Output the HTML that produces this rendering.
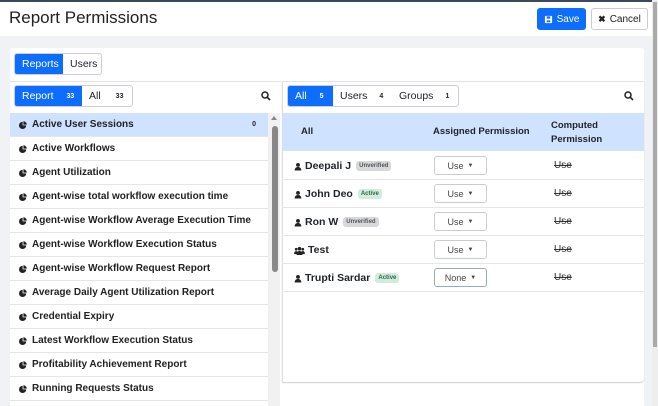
<!DOCTYPE html>
<html><head><meta charset="utf-8"><style>
*{box-sizing:border-box;margin:0;padding:0}
html,body{width:658px;height:406px;overflow:hidden}
body{background:#f0f2f5;font-family:"Liberation Sans",Arial,sans-serif;color:#212529;position:relative}
.top{position:absolute;left:0;top:0;width:652px;height:36px;background:#fff;border-top:2px solid #3a4a5c}
.title{position:absolute;left:9px;top:6px;font-size:17px;color:#222}
.btn{position:absolute;height:22px;border-radius:3px;font-size:10px;display:flex;align-items:center;justify-content:center;gap:4px}
.save{left:537px;top:8px;width:49px;background:#0d6efd;color:#fff}
.cancel{left:591px;top:8px;width:57px;background:#fff;border:1px solid #ccc;color:#222}
.card{position:absolute;left:10px;top:48px;width:634px;height:360px;background:#fff;border-radius:3px}
.seg{position:absolute;display:flex;border:1px solid #ccd;border-radius:3px;overflow:hidden;height:22px;font-size:10.5px}
.seg div{display:flex;align-items:center;justify-content:flex-start;padding-left:7px}
.seg .on{background:#0d6efd;color:#fff}
.seg b{font-size:7px}
.left{position:absolute;left:10px;top:81px;width:271px;height:325px;background:#fff;border-top:1px solid #e3e3e3}
.row{position:absolute;left:10px;width:258px;height:24px;border-bottom:1px solid #e6e6e6;font-size:10px;font-weight:bold;display:flex;align-items:center;padding-left:9px;color:#222}
.row.sel{background:#cfe2ff}
.pie{width:8px;height:8px;margin-right:5px}
.sb{position:absolute;left:268px;top:113px;width:12px;height:293px;background:#f1f1f1}
.thumb{position:absolute;left:272px;top:126px;width:6px;height:146px;background:#888;border-radius:3px}
.right{position:absolute;left:282px;top:81px;width:362px;height:301px;background:#fff;border-left:1px solid #ddd;border-top:1px solid #e3e3e3;border-radius:0 0 4px 0;box-shadow:0 1px 1px #ccc}
.hdr{position:absolute;left:282px;top:113px;width:362px;height:38px;background:#cfe2ff;font-size:9.5px;font-weight:bold}
.r{position:absolute;left:282px;width:362px;height:28px;border-bottom:1px solid #e6e6e6;font-size:10px}
.nm{position:absolute;left:12px;top:8px;font-weight:bold;display:flex;align-items:center;gap:3px;font-size:10.5px}
.bd{font-size:6px;padding:2px 3px;border-radius:3px;font-weight:bold;margin-left:2px}
.un{background:#d6d8db;color:#555}
.ac{background:#d1ecdf;color:#2a6a45}
.dd{position:absolute;left:152px;top:4px;width:53px;height:19px;border:1px solid #ccc;border-radius:3px;font-size:9px;display:flex;align-items:center;justify-content:center;color:#444}
.dd i{font-style:normal;font-size:6px;margin-left:4px}
.cp{position:absolute;left:272px;top:8px;font-size:10px;text-decoration:line-through;color:#333}
.psb{position:absolute;left:652px;top:0;width:6px;height:406px;background:#eee}
.pth{position:absolute;left:653px;top:2px;width:4px;height:345px;background:#aaa}
</style></head><body>
<svg width="0" height="0" style="position:absolute"><defs>
<symbol id="pie" viewBox="0 0 10 10"><path d="M4.5 1A4.5 4.5 0 1 0 9 5.5H4.5Z" fill="#222"/><path d="M5.5 0.3A4.3 4.3 0 0 1 9.7 4.5H5.5Z" fill="#222"/></symbol>
<symbol id="usr" viewBox="0 0 10 10"><circle cx="5" cy="3" r="2.4" fill="#222"/><path d="M0.8 10C0.8 7 2.5 5.6 5 5.6S9.2 7 9.2 10Z" fill="#222"/></symbol>
<symbol id="grp" viewBox="0 0 12 10"><circle cx="6" cy="3" r="2" fill="#222"/><circle cx="2.3" cy="3.6" r="1.5" fill="#222"/><circle cx="9.7" cy="3.6" r="1.5" fill="#222"/><path d="M2.8 10C2.8 7 4.2 5.6 6 5.6S9.2 7 9.2 10Z" fill="#222"/><path d="M0 9C0 6.8 1 5.7 2.4 5.7S4 6.2 4 6.5V9Z M12 9C12 6.8 11 5.7 9.6 5.7S8 6.2 8 6.5V9Z" fill="#222"/></symbol>
</defs></svg>
<div class="top"><div class="title">Report Permissions</div></div>
<div class="btn save"><svg width="9" height="9" viewBox="0 0 10 10"><rect x="1" y="1" width="8" height="8" rx="1" fill="#fff"/><rect x="3" y="1.5" width="4" height="2.5" fill="#0d6efd"/><rect x="3" y="6" width="4" height="2" fill="#0d6efd"/></svg>Save</div>
<div class="btn cancel"><b style="font-size:9px">✖</b>Cancel</div>
<div class="card"></div>
<div class="seg" style="left:14px;top:53px"><div class="on" style="width:48px">Reports</div><div style="width:38px">Users</div></div>
<div class="left"></div>
<div class="seg" style="left:14px;top:85px"><div class="on" style="width:67px">Report<b style="margin-left:13px">33</b></div><div style="width:50px">All<b style="margin-left:15px">33</b></div></div>
<svg style="position:absolute;left:261px;top:91px" width="10" height="10" viewBox="0 0 10 10"><circle cx="4" cy="4" r="3" fill="none" stroke="#222" stroke-width="1.5"/><path d="M6.3 6.3L9 9" stroke="#222" stroke-width="1.6"/></svg>
<div class="row sel" style="top:113px"><svg class="pie"><use href="#pie"/></svg>Active User Sessions<span style="margin-left:auto;margin-right:12px;font-size:7px">0</span></div>
<div class="row" style="top:137px"><svg class="pie"><use href="#pie"/></svg>Active Workflows</div>
<div class="row" style="top:161px"><svg class="pie"><use href="#pie"/></svg>Agent Utilization</div>
<div class="row" style="top:185px"><svg class="pie"><use href="#pie"/></svg>Agent-wise total workflow execution time</div>
<div class="row" style="top:209px"><svg class="pie"><use href="#pie"/></svg>Agent-wise Workflow Average Execution Time</div>
<div class="row" style="top:233px"><svg class="pie"><use href="#pie"/></svg>Agent-wise Workflow Execution Status</div>
<div class="row" style="top:257px"><svg class="pie"><use href="#pie"/></svg>Agent-wise Workflow Request Report</div>
<div class="row" style="top:281px"><svg class="pie"><use href="#pie"/></svg>Average Daily Agent Utilization Report</div>
<div class="row" style="top:305px"><svg class="pie"><use href="#pie"/></svg>Credential Expiry</div>
<div class="row" style="top:329px"><svg class="pie"><use href="#pie"/></svg>Latest Workflow Execution Status</div>
<div class="row" style="top:353px"><svg class="pie"><use href="#pie"/></svg>Profitability Achievement Report</div>
<div class="row" style="top:377px"><svg class="pie"><use href="#pie"/></svg>Running Requests Status</div>
<div class="row" style="top:401px"></div>
<div class="sb"></div><div class="thumb"></div>
<div style="position:absolute;left:271px;top:116px;width:0;height:0;border-left:3px solid transparent;border-right:3px solid transparent;border-bottom:4px solid #888"></div>
<div class="right"></div>
<div class="seg" style="left:287px;top:85px"><div class="on" style="width:45px">All<b style="margin-left:13px">5</b></div><div style="width:59px">Users<b style="margin-left:12px">4</b></div><div style="width:66px">Groups<b style="margin-left:12px">1</b></div></div>
<svg style="position:absolute;left:624px;top:91px" width="10" height="10" viewBox="0 0 10 10"><circle cx="4" cy="4" r="3" fill="none" stroke="#222" stroke-width="1.5"/><path d="M6.3 6.3L9 9" stroke="#222" stroke-width="1.6"/></svg>
<div class="hdr"><span style="position:absolute;left:19px;top:13px">All</span><span style="position:absolute;left:151px;top:13px">Assigned Permission</span><span style="position:absolute;left:269px;top:6px;line-height:14px">Computed<br>Permission</span></div>
<div class="r" style="top:152px"><div class="nm"><svg width="8" height="9"><use href="#usr"/></svg>Deepali J <span class="bd un">Unverified</span></div><div class="dd">Use<i>▼</i></div><div class="cp">Use</div></div>
<div class="r" style="top:180px"><div class="nm"><svg width="8" height="9"><use href="#usr"/></svg>John Deo <span class="bd ac">Active</span></div><div class="dd">Use<i>▼</i></div><div class="cp">Use</div></div>
<div class="r" style="top:208px"><div class="nm"><svg width="8" height="9"><use href="#usr"/></svg>Ron W <span class="bd un">Unverified</span></div><div class="dd">Use<i>▼</i></div><div class="cp">Use</div></div>
<div class="r" style="top:236px"><div class="nm"><svg width="11" height="9"><use href="#grp"/></svg>Test</div><div class="dd">Use<i>▼</i></div><div class="cp">Use</div></div>
<div class="r" style="top:264px"><div class="nm"><svg width="8" height="9"><use href="#usr"/></svg>Trupti Sardar <span class="bd ac">Active</span></div><div class="dd" style="border-color:#9ab">None<i>▼</i></div><div class="cp">Use</div></div>
<div class="psb"></div><div class="pth"></div>
</body></html>
